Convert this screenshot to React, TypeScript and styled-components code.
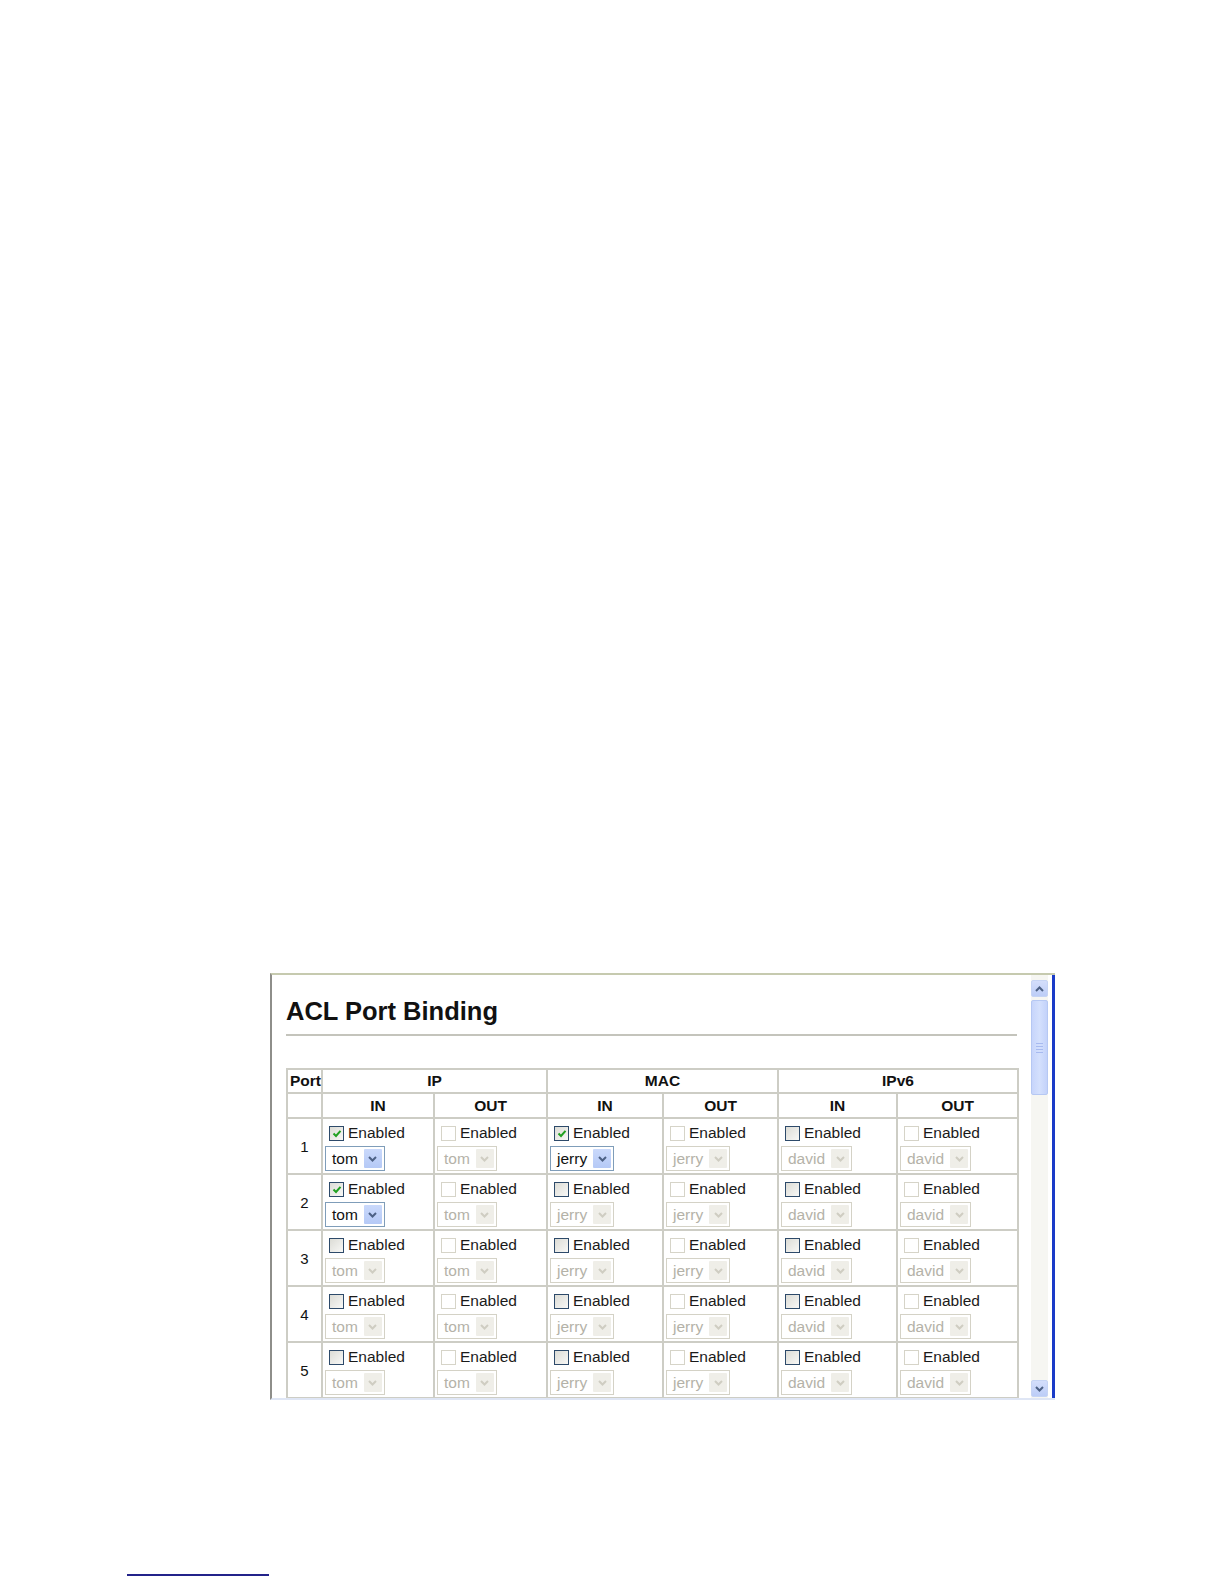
import styled, { createGlobalStyle } from 'styled-components'

const GlobalStyle = createGlobalStyle`
  html, body {
    margin: 0;
    padding: 0;
    background: #fff;
    font-family: "Liberation Sans", Arial, sans-serif;
  }
`

type Cell = { checked: boolean; value: string; enabled: boolean }

const groups = ['IP', 'MAC', 'IPv6']
const names = ['tom', 'jerry', 'david']
const checkedMap: Record<number, number[]> = { 1: [0, 2], 2: [0] }

const rows = [1, 2, 3, 4, 5].map((port) => ({
  port,
  cells: [0, 1, 2, 3, 4, 5].map(
    (i): Cell => ({
      checked: (checkedMap[port] || []).includes(i),
      value: names[Math.floor(i / 2)],
      enabled: i % 2 === 0,
    })
  ),
}))

const widths = [35, 112, 113, 116, 115, 119, 121]

const CheckIcon = () => (
  <svg width="10" height="9" viewBox="0 0 10 9">
    <path d="M1.5 4.5 L4 7 L8.5 1.8" fill="none" stroke="#21a121" strokeWidth="2" />
  </svg>
)

const Chevron = ({ color }: { color: string }) => (
  <svg width="9" height="6" viewBox="0 0 9 6">
    <path d="M1 1 L4.5 4.5 L8 1" fill="none" stroke={color} strokeWidth="2" />
  </svg>
)

const App = () => {
  return (
    <Page>
      <GlobalStyle />
      <Frame>
        <Content>
          <Title>ACL Port Binding</Title>
          <Rule />
          <Table>
            <colgroup>
              {widths.map((w, i) => (
                <col key={i} style={{ width: w }} />
              ))}
            </colgroup>
            <thead>
              <HeadRow $h={24}>
                <Th>Port</Th>
                {groups.map((g) => (
                  <Th key={g} colSpan={2}>
                    {g}
                  </Th>
                ))}
              </HeadRow>
              <HeadRow $h={25}>
                <Th />
                {groups.map((g) => [
                  <Th key={g + 'in'}>IN</Th>,
                  <Th key={g + 'out'}>OUT</Th>,
                ])}
              </HeadRow>
            </thead>
            <tbody>
              {rows.map((r) => (
                <DataRow key={r.port}>
                  <PortCell>{r.port}</PortCell>
                  {r.cells.map((c, i) => (
                    <Td key={i}>
                      <CheckLine>
                        <Box $enabled={c.enabled}>{c.checked && <CheckIcon />}</Box>
                        <span>Enabled</span>
                      </CheckLine>
                      <Select $active={c.checked}>
                        <SelectText>{c.value}</SelectText>
                        <SelectButton $active={c.checked}>
                          <Chevron color={c.checked ? '#4d6185' : '#cfcdc2'} />
                        </SelectButton>
                      </Select>
                    </Td>
                  ))}
                </DataRow>
              ))}
            </tbody>
          </Table>
        </Content>
        <ScrollBar>
          <ScrollButton>
            <svg width="9" height="6" viewBox="0 0 9 6">
              <path d="M1 5 L4.5 1.5 L8 5" fill="none" stroke="#4d6185" strokeWidth="2" />
            </svg>
          </ScrollButton>
          <Thumb>
            <Grip />
            <Grip />
            <Grip />
            <Grip />
          </Thumb>
          <Track />
          <ScrollButton>
            <Chevron color="#4d6185" />
          </ScrollButton>
        </ScrollBar>
        <Gap />
        <BlueEdge />
      </Frame>
      <FootRule />
    </Page>
  )
}

const Page = styled.div`
  display: flex;
  flex-direction: column;
  align-items: flex-start;
  padding-top: 973px;
  width: 1224px;
  height: 1584px;
  box-sizing: border-box;
`

const Frame = styled.div`
  display: flex;
  margin-left: 270px;
  width: 785px;
  height: 427px;
  box-sizing: border-box;
  border-top: 2px solid #c6caaf;
  border-left: 2px solid #8e8e8a;
  border-bottom: 2px solid #dfe6f5;
  background: #fff;
  overflow: hidden;
`

const Content = styled.div`
  flex: 0 0 759px;
  padding: 22px 14px 0 14px;
  box-sizing: border-box;
  overflow: hidden;
`

const Title = styled.h1`
  margin: 0;
  font-size: 25.5px;
  line-height: 28px;
  font-weight: 700;
  color: #111;
`

const Rule = styled.div`
  margin-top: 9px;
  height: 2px;
  width: 731px;
  background: #c4c4bc;
`

const Table = styled.table`
  margin-top: 32px;
  width: 731px;
  table-layout: fixed;
  border-collapse: collapse;
  font-size: 15px;
  color: #111;
`

const HeadRow = styled.tr<{ $h: number }>`
  height: ${(p) => p.$h}px;
`

const Th = styled.th`
  border: 2px solid #cdcdc5;
  padding: 0 2px;
  font-weight: 700;
  font-size: 15.5px;
  text-align: center;
  vertical-align: middle;
  &:first-child {
    text-align: left;
  }
`

const DataRow = styled.tr`
  height: 56px;
`

const PortCell = styled.td`
  border: 2px solid #cdcdc5;
  text-align: center;
  vertical-align: middle;
  font-size: 15px;
  padding: 0;
`

const Td = styled.td`
  border: 2px solid #cdcdc5;
  vertical-align: top;
  padding: 4px 2px 0 2px;
`

const CheckLine = styled.div`
  display: flex;
  align-items: center;
  gap: 4px;
  height: 20px;
  margin-left: 4px;
  font-size: 15.5px;
  color: #1a1a1a;
`

const Box = styled.span<{ $enabled: boolean }>`
  display: inline-flex;
  align-items: center;
  justify-content: center;
  width: 15px;
  height: 15px;
  box-sizing: border-box;
  border: 1px solid ${(p) => (p.$enabled ? '#2d4a6a' : '#d6d4c8')};
  background: ${(p) =>
    p.$enabled ? 'linear-gradient(135deg, #dcdcd6, #f8f8f6)' : '#fff'};
`

const Select = styled.div<{ $active: boolean }>`
  display: inline-flex;
  align-items: stretch;
  margin-top: 3px;
  height: 25px;
  box-sizing: border-box;
  border: 1px solid ${(p) => (p.$active ? '#7f9db9' : '#d4d2c6')};
  background: #fff;
  color: ${(p) => (p.$active ? '#111' : '#b4b2a8')};
  padding: 2px;
`

const SelectText = styled.span`
  padding: 0 6px 0 4px;
  font-size: 15.5px;
  line-height: 20px;
`

const SelectButton = styled.span<{ $active: boolean }>`
  display: flex;
  align-items: center;
  justify-content: center;
  width: 18px;
  background: ${(p) =>
    p.$active ? 'linear-gradient(#cad9fb, #b5c9f6)' : '#efeee8'};
  border-radius: 1px;
`

const ScrollBar = styled.div`
  display: flex;
  flex-direction: column;
  flex: 0 0 17px;
  padding: 5px 0 1px;
  box-sizing: border-box;
  background: #f6f6f2;
`

const ScrollButton = styled.div`
  display: flex;
  align-items: center;
  justify-content: center;
  height: 17px;
  border-radius: 2px;
  background: linear-gradient(#d4defb, #bccdf7);
  border: 1px solid #c6d4f4;
  box-sizing: border-box;
`

const Thumb = styled.div`
  display: flex;
  flex-direction: column;
  justify-content: center;
  align-items: center;
  gap: 2px;
  margin-top: 3px;
  height: 95px;
  border-radius: 2px;
  border: 1px solid #b6c8f3;
  box-sizing: border-box;
  background: linear-gradient(90deg, #c7d5fb, #d4e0fd 50%, #c3d2fa);
`

const Grip = styled.span`
  width: 7px;
  height: 1px;
  background: #a7baf0;
`

const Track = styled.div`
  flex: 1;
`

const Gap = styled.div`
  flex: 0 0 4px;
  background: #fff;
`

const BlueEdge = styled.div`
  flex: 0 0 3px;
  background: #1a3bc8;
`

const FootRule = styled.div`
  margin-top: 174px;
  margin-left: 127px;
  width: 142px;
  height: 2px;
  background: #23238a;
`

export default App
